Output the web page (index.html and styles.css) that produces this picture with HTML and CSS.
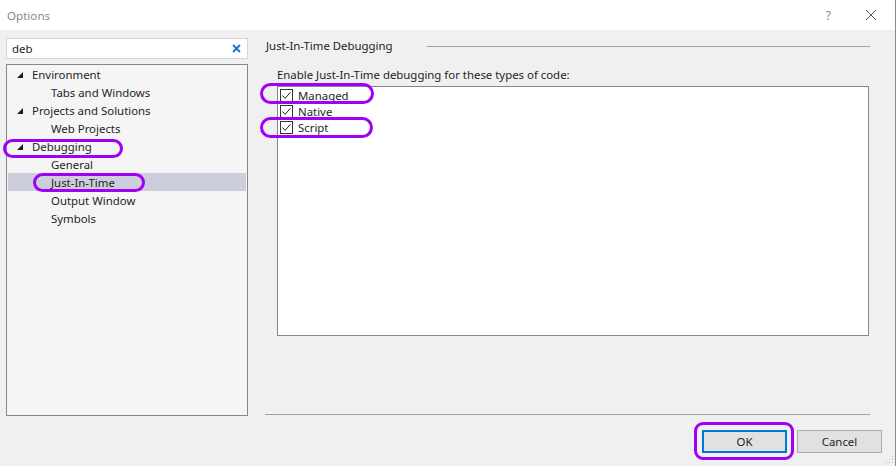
FILE: index.html
```html
<!DOCTYPE html>
<html>
<head>
<meta charset="utf-8">
<title>Options</title>
<link rel="stylesheet" href="styles.css">
</head>
<body>
<div class="window">
  <div class="titlebar">
    <span class="title">Options</span>
    <span class="help">?</span>
    <svg class="close" width="12" height="12" viewBox="0 0 12 12"><path d="M1 1L11 11M11 1L1 11" stroke="#555" stroke-width="1" fill="none"/></svg>
  </div>
  <div class="body">
    <div class="main">
      <div class="left">
        <div class="search">
          <span class="search-text">deb</span>
          <svg class="search-clear" width="9" height="9" viewBox="0 0 9 9"><path d="M1 1L8 8M8 1L1 8" stroke="#1e73c8" stroke-width="1.8" fill="none"/></svg>
        </div>
        <div class="tree">
          <div class="node"><svg class="tri" width="6" height="6" viewBox="0 0 6 6"><polygon points="6,0 6,6 0,6" fill="#1e1e1e"/></svg><span>Environment</span></div>
          <div class="node child"><span>Tabs and Windows</span></div>
          <div class="node"><svg class="tri" width="6" height="6" viewBox="0 0 6 6"><polygon points="6,0 6,6 0,6" fill="#1e1e1e"/></svg><span>Projects and Solutions</span></div>
          <div class="node child"><span>Web Projects</span></div>
          <div class="node"><svg class="tri" width="6" height="6" viewBox="0 0 6 6"><polygon points="6,0 6,6 0,6" fill="#1e1e1e"/></svg><span>Debugging</span></div>
          <div class="node child"><span>General</span></div>
          <div class="node child selected"><span>Just-In-Time</span></div>
          <div class="node child"><span>Output Window</span></div>
          <div class="node child"><span>Symbols</span></div>
        </div>
      </div>
      <div class="right">
        <div class="header">
          <span class="header-title">Just-In-Time Debugging</span>
          <span class="header-line"></span>
        </div>
        <div class="prompt">Enable Just-In-Time debugging for these types of code:</div>
        <div class="listbox">
          <div class="check-row"><span class="box"><svg width="11" height="11" viewBox="0 0 11 11"><path d="M1.5 5.5L4.2 8.3L9.5 2.2" stroke="#222" stroke-width="1" fill="none"/></svg></span><span>Managed</span></div>
          <div class="check-row"><span class="box"><svg width="11" height="11" viewBox="0 0 11 11"><path d="M1.5 5.5L4.2 8.3L9.5 2.2" stroke="#222" stroke-width="1" fill="none"/></svg></span><span>Native</span></div>
          <div class="check-row"><span class="box"><svg width="11" height="11" viewBox="0 0 11 11"><path d="M1.5 5.5L4.2 8.3L9.5 2.2" stroke="#222" stroke-width="1" fill="none"/></svg></span><span>Script</span></div>
        </div>
        <div class="spacer"></div>
        <div class="separator"></div>
      </div>
    </div>
    <div class="footer">
      <button class="btn btn-default">OK</button>
      <button class="btn">Cancel</button>
    </div>
    <svg class="grip" width="8" height="8" viewBox="0 0 8 8">
      <rect x="6" y="0" width="1" height="1" fill="#bbb"/>
      <rect x="3" y="3" width="1" height="1" fill="#bbb"/>
      <rect x="6" y="3" width="1" height="1" fill="#bbb"/>
      <rect x="0" y="6" width="1" height="1" fill="#bbb"/>
      <rect x="3" y="6" width="1" height="1" fill="#bbb"/>
      <rect x="6" y="6" width="1" height="1" fill="#bbb"/>
    </svg>
  </div>
</div>
<div class="mark mark-managed"></div>
<div class="mark mark-script"></div>
<div class="mark mark-debugging"></div>
<div class="mark mark-jit"></div>
<div class="mark mark-ok"></div>
</body>
</html>
```
FILE: styles.css
```css
* { box-sizing: border-box; }
html, body {
  margin: 0;
  padding: 0;
  width: 896px;
  height: 466px;
  overflow: hidden;
  font-family: "Noto Sans", "DejaVu Sans", sans-serif;
  font-size: 11.4px;
  color: #1e1e1e;
}
body { position: relative; background: #f0f0f0; }

.window {
  width: 896px;
  height: 466px;
  border-right: 1px solid #8a8a8a;
  display: flex;
  flex-direction: column;
}

.titlebar {
  height: 30px;
  background: #ffffff;
  display: flex;
  align-items: center;
  padding-left: 7px;
}
.title { color: #8a8a8a; font-size: 11.6px; }
.help { margin-left: auto; color: #888; font-size: 12px; margin-right: 34px; }
.close { margin-right: 18px; }

.body {
  flex: 1;
  background: #f0f0f0;
  display: flex;
  flex-direction: column;
  position: relative;
}

.main {
  height: 386px;
  display: flex;
  padding-top: 8px;
}

.left {
  margin-left: 6px;
  width: 242px;
  display: flex;
  flex-direction: column;
}

.search {
  height: 21px;
  background: #fff;
  border: 1px solid #d4d4d4;
  display: flex;
  align-items: center;
  padding-left: 5px;
  padding-right: 6px;
}
.search-text { line-height: 16px; }
.search-clear { margin-left: auto; }

.tree {
  margin-top: 5px;
  height: 352px;
  background: #f5f5f5;
  border: 1px solid #828790;
  padding: 0 1px;
}
.node {
  height: 18px;
  display: flex;
  align-items: center;
  padding-left: 9px;
  white-space: nowrap;
}
.node .tri { margin-right: 9px; margin-top: 1px; }
.node.child { padding-left: 43px; }
.node.selected { background: #cccedb; }

.right {
  margin-left: 17px;
  width: 605px;
  display: flex;
  flex-direction: column;
}

.header {
  display: flex;
  align-items: center;
  height: 16px;
  padding-left: 1px;
}
.header-title { line-height: 16px; }
.header-line {
  margin-left: 34px;
  flex: 1;
  border-top: 1px solid #a0a0a0;
  margin-top: 1px;
}

.prompt {
  margin-top: 13px;
  margin-left: 12px;
  line-height: 16px;
}

.listbox {
  margin-top: 3px;
  margin-left: 12px;
  width: 592px;
  height: 250px;
  background: #fff;
  border: 1px solid #828790;
}
.check-row {
  height: 16px;
  display: flex;
  align-items: center;
  padding-left: 2px;
}
.box {
  width: 13px;
  height: 13px;
  border: 1px solid #333;
  background: #fff;
  display: flex;
  margin-right: 5px;
}

.spacer { flex: 1; }
.separator {
  border-top: 1px solid #a0a0a0;
  margin-bottom: 1px;
}

.footer {
  flex: 1;
  display: flex;
  justify-content: flex-end;
  align-items: flex-start;
  padding-top: 14px;
  padding-right: 13px;
  gap: 10px;
}
.btn {
  width: 85px;
  height: 23px;
  background: #e1e1e1;
  border: 1px solid #adadad;
  font-family: "Noto Sans", "DejaVu Sans", sans-serif;
  font-size: 11.4px;
  color: #1e1e1e;
  padding: 0;
}
.btn-default {
  border: 2px solid #0078d7;
}

.grip {
  position: absolute;
  right: 1px;
  bottom: 2px;
}

.mark {
  position: absolute;
  border: 3px solid #a000f5;
  border-radius: 12px;
}
.mark-managed { left: 260px; top: 83px; width: 114px; height: 21px; }
.mark-script { left: 260px; top: 117px; width: 113px; height: 21px; }
.mark-debugging { left: 3px; top: 139px; width: 120px; height: 19px; }
.mark-jit { left: 33px; top: 173px; width: 112px; height: 19px; }
.mark-ok { left: 694px; top: 422px; width: 100px; height: 38px; border-radius: 9px; }
```
